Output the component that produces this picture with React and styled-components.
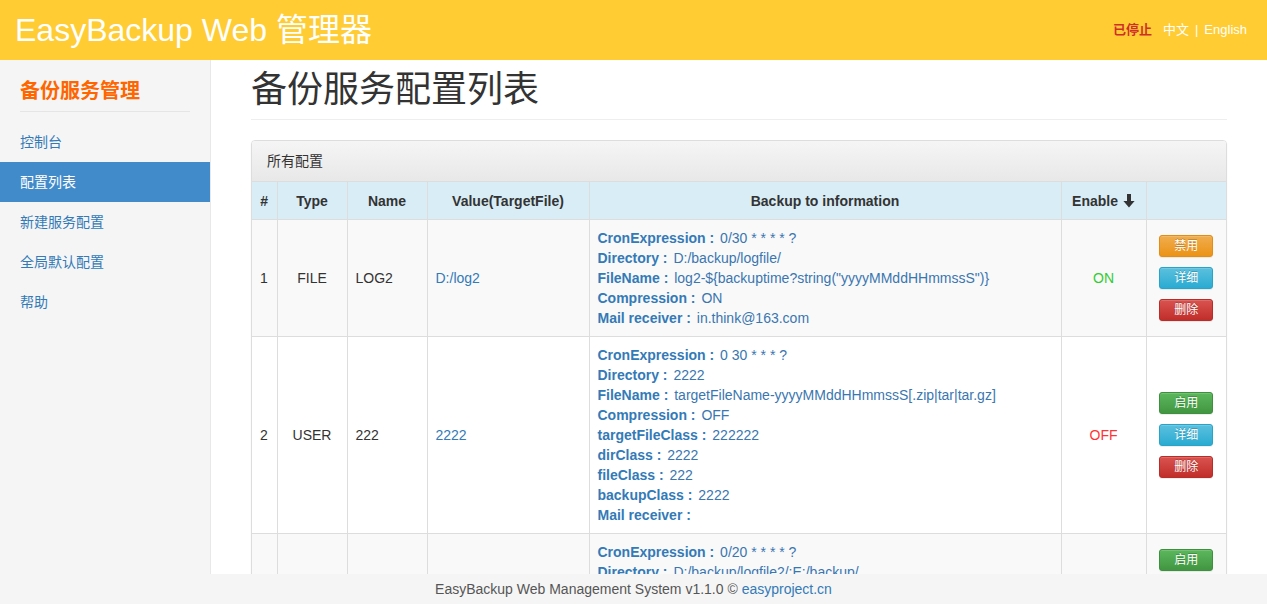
import styled, { createGlobalStyle } from "styled-components";

const GlobalStyle = createGlobalStyle`
  html, body {
    margin: 0;
    padding: 0;
    overflow: hidden;
  }
  body {
    font-family: "Liberation Sans", "Noto Sans CJK SC", sans-serif;
    font-size: 14px;
    line-height: 20px;
    color: #333;
    background: #fff;
  }
  * {
    box-sizing: border-box;
  }
`;

const TopBar = styled.header`
  height: 60px;
  background-color: #ffcc33;
  display: flex;
  align-items: center;
  justify-content: space-between;
  padding: 0 20px 0 15px;
`;

const Brand = styled.div`
  color: #fff;
  font-size: 32px;
  line-height: 60px;
`;

const TopNav = styled.div`
  display: flex;
  align-items: center;
  gap: 11px;
  font-size: 13px;
  line-height: 60px;
`;

const Status = styled.span`
  color: #cf2f2a;
  font-weight: bold;
`;

const Lang = styled.span`
  color: #fff;
`;

const Divider = styled.span`
  margin: 0 6px;
`;

const Body = styled.div`
  display: flex;
  min-height: 544px;
`;

const Sidebar = styled.aside`
  width: 211px;
  flex-shrink: 0;
  background-color: #f5f5f5;
  border-right: 1px solid #e8e8e8;
`;

const SideTitle = styled.h3`
  margin: 0 20px 10px;
  padding: 17px 0 6px;
  font-size: 20px;
  line-height: 28px;
  font-weight: bold;
  color: #ff6600;
  border-bottom: 1px solid #e5e5e5;
`;

const NavItem = styled.a`
  display: block;
  padding: 10px 20px;
  line-height: 20px;
  font-size: 14px;
  color: ${(props) => (props.active ? "#fff" : "#337ab7")};
  background-color: ${(props) => (props.active ? "#428bca" : "transparent")};
  text-decoration: none;
`;

const Main = styled.main`
  flex: 1;
  padding: 0 40px;
`;

const PageTitle = styled.h1`
  margin: 10px 0 20px;
  padding-bottom: 9px;
  font-size: 36px;
  line-height: 1.1;
  font-weight: 400;
  color: #333;
  border-bottom: 1px solid #eee;
`;

const Panel = styled.div`
  border: 1px solid #ddd;
  border-radius: 4px;
  box-shadow: 0 1px 2px rgba(0, 0, 0, 0.05);
  overflow: hidden;
`;

const PanelHeading = styled.div`
  padding: 10px 15px;
  font-size: 14px;
  line-height: 20px;
  color: #333;
  background-image: linear-gradient(to bottom, #f5f5f5 0%, #e8e8e8 100%);
  border-bottom: 1px solid #ddd;
`;

const Table = styled.table`
  width: 100%;
  border-collapse: collapse;
  table-layout: fixed;
`;

const Th = styled.th`
  padding: 9px 8px 8px;
  line-height: 20px;
  font-weight: bold;
  text-align: center;
  background-color: #d9edf7;
  border: 1px solid #ddd;
  border-top: 0;
  &:first-child {
    border-left: 0;
  }
  &:last-child {
    border-right: 0;
  }
`;

const Row = styled.tr`
  background-color: ${(props) => (props.striped ? "#f9f9f9" : "#fff")};
`;

const Td = styled.td`
  padding: 8px;
  line-height: 20px;
  vertical-align: middle;
  text-align: ${(props) => props.align || "left"};
  color: ${(props) => props.color || "#333"};
  border: 1px solid #ddd;
  &:first-child {
    border-left: 0;
  }
  &:last-child {
    border-right: 0;
  }
`;

const InfoLine = styled.div`
  color: #3a76b0;
  white-space: nowrap;
`;

const InfoLabel = styled.b`
  font-weight: bold;
  color: #337ab7;
  margin-right: 2px;
`;

const Actions = styled.div`
  display: flex;
  flex-direction: column;
  align-items: center;
  gap: 10px;
`;

const gradients = {
  warning: ["#f0ad4e", "#eb9316", "#e38d13"],
  info: ["#5bc0de", "#2aabd2", "#28a4c9"],
  danger: ["#d9534f", "#c12e2a", "#b92c28"],
  success: ["#5cb85c", "#419641", "#3e8f3e"],
};

const Btn = styled.button`
  width: 54px;
  height: 22px;
  padding: 0;
  font-family: inherit;
  font-size: 12px;
  line-height: 20px;
  color: #fff;
  text-shadow: 0 -1px 0 rgba(0, 0, 0, 0.2);
  border-radius: 3px;
  border: 1px solid ${(props) => gradients[props.kind][2]};
  background-image: linear-gradient(
    to bottom,
    ${(props) => gradients[props.kind][0]} 0%,
    ${(props) => gradients[props.kind][1]} 100%
  );
  box-shadow: inset 0 1px 0 rgba(255, 255, 255, 0.15),
    0 1px 1px rgba(0, 0, 0, 0.075);
  cursor: pointer;
`;

const Link = styled.a`
  color: #337ab7;
  text-decoration: none;
`;

const SortIcon = styled.svg`
  width: 12px;
  height: 14px;
  margin-left: 5px;
  vertical-align: -2px;
`;

const Footer = styled.footer`
  position: fixed;
  left: 0;
  right: 0;
  bottom: 0;
  height: 30px;
  line-height: 30px;
  text-align: center;
  font-size: 14px;
  color: #555;
  background-color: #f5f5f5;
`;

const configs = [
  {
    id: 1,
    type: "FILE",
    name: "LOG2",
    value: "D:/log2",
    enabled: true,
    info: [
      ["CronExpression", "0/30 * * * * ?"],
      ["Directory", "D:/backup/logfile/"],
      ["FileName", 'log2-${backuptime?string("yyyyMMddHHmmssS")}'],
      ["Compression", "ON"],
      ["Mail receiver", "in.think@163.com"],
    ],
  },
  {
    id: 2,
    type: "USER",
    name: "222",
    value: "2222",
    enabled: false,
    info: [
      ["CronExpression", "0 30 * * * ?"],
      ["Directory", "2222"],
      ["FileName", "targetFileName-yyyyMMddHHmmssS[.zip|tar|tar.gz]"],
      ["Compression", "OFF"],
      ["targetFileClass", "222222"],
      ["dirClass", "2222"],
      ["fileClass", "222"],
      ["backupClass", "2222"],
      ["Mail receiver", ""],
    ],
  },
  {
    id: 3,
    type: "FILE",
    name: "LOG",
    value: "D:/log",
    enabled: false,
    info: [
      ["CronExpression", "0/20 * * * * ?"],
      ["Directory", "D:/backup/logfile2/;E:/backup/"],
      ["FileName", 'log-${backuptime?string("yyyyMMddHHmmssS")}'],
      ["Compression", "ON"],
      ["Mail receiver", ""],
    ],
  },
];

const navItems = ["控制台", "配置列表", "新建服务配置", "全局默认配置", "帮助"];

function App() {
  return (
    <>
      <GlobalStyle />
      <TopBar>
        <Brand>EasyBackup Web 管理器</Brand>
        <TopNav>
          <Status>已停止</Status>
          <Lang>
            中文<Divider>|</Divider>English
          </Lang>
        </TopNav>
      </TopBar>
      <Body>
        <Sidebar>
          <SideTitle>备份服务管理</SideTitle>
          {navItems.map((item) => (
            <NavItem key={item} active={item === "配置列表"}>
              {item}
            </NavItem>
          ))}
        </Sidebar>
        <Main>
          <PageTitle>备份服务配置列表</PageTitle>
          <Panel>
            <PanelHeading>所有配置</PanelHeading>
            <Table>
              <colgroup>
                <col style={{ width: 25 }} />
                <col style={{ width: 70 }} />
                <col style={{ width: 80 }} />
                <col style={{ width: 162 }} />
                <col style={{ width: 472 }} />
                <col style={{ width: 85 }} />
                <col style={{ width: 80 }} />
              </colgroup>
              <thead>
                <tr>
                  <Th>#</Th>
                  <Th>Type</Th>
                  <Th>Name</Th>
                  <Th>Value(TargetFile)</Th>
                  <Th>Backup to information</Th>
                  <Th>
                    Enable
                    <SortIcon viewBox="0 0 12 14">
                      <path d="M4 0h4v7h3.6L6 13.6 0.4 7H4z" fill="#333" />
                    </SortIcon>
                  </Th>
                  <Th />
                </tr>
              </thead>
              <tbody>
                {configs.map((c, i) => (
                  <Row key={c.id} striped={i % 2 === 0}>
                    <Td>{c.id}</Td>
                    <Td align="center">{c.type}</Td>
                    <Td>{c.name}</Td>
                    <Td>
                      <Link>{c.value}</Link>
                    </Td>
                    <Td>
                      {c.info.map(([label, val]) => (
                        <InfoLine key={label}>
                          <InfoLabel>{label} : </InfoLabel>
                          {val}
                        </InfoLine>
                      ))}
                    </Td>
                    <Td align="center" color={c.enabled ? "#33cc33" : "#ff3333"}>
                      {c.enabled ? "ON" : "OFF"}
                    </Td>
                    <Td>
                      <Actions>
                        {c.enabled ? (
                          <Btn kind="warning">禁用</Btn>
                        ) : (
                          <Btn kind="success">启用</Btn>
                        )}
                        <Btn kind="info">详细</Btn>
                        <Btn kind="danger">删除</Btn>
                      </Actions>
                    </Td>
                  </Row>
                ))}
              </tbody>
            </Table>
          </Panel>
        </Main>
      </Body>
      <Footer>
        EasyBackup Web Management System v1.1.0 © <Link>easyproject.cn</Link>
      </Footer>
    </>
  );
}

export default App;
